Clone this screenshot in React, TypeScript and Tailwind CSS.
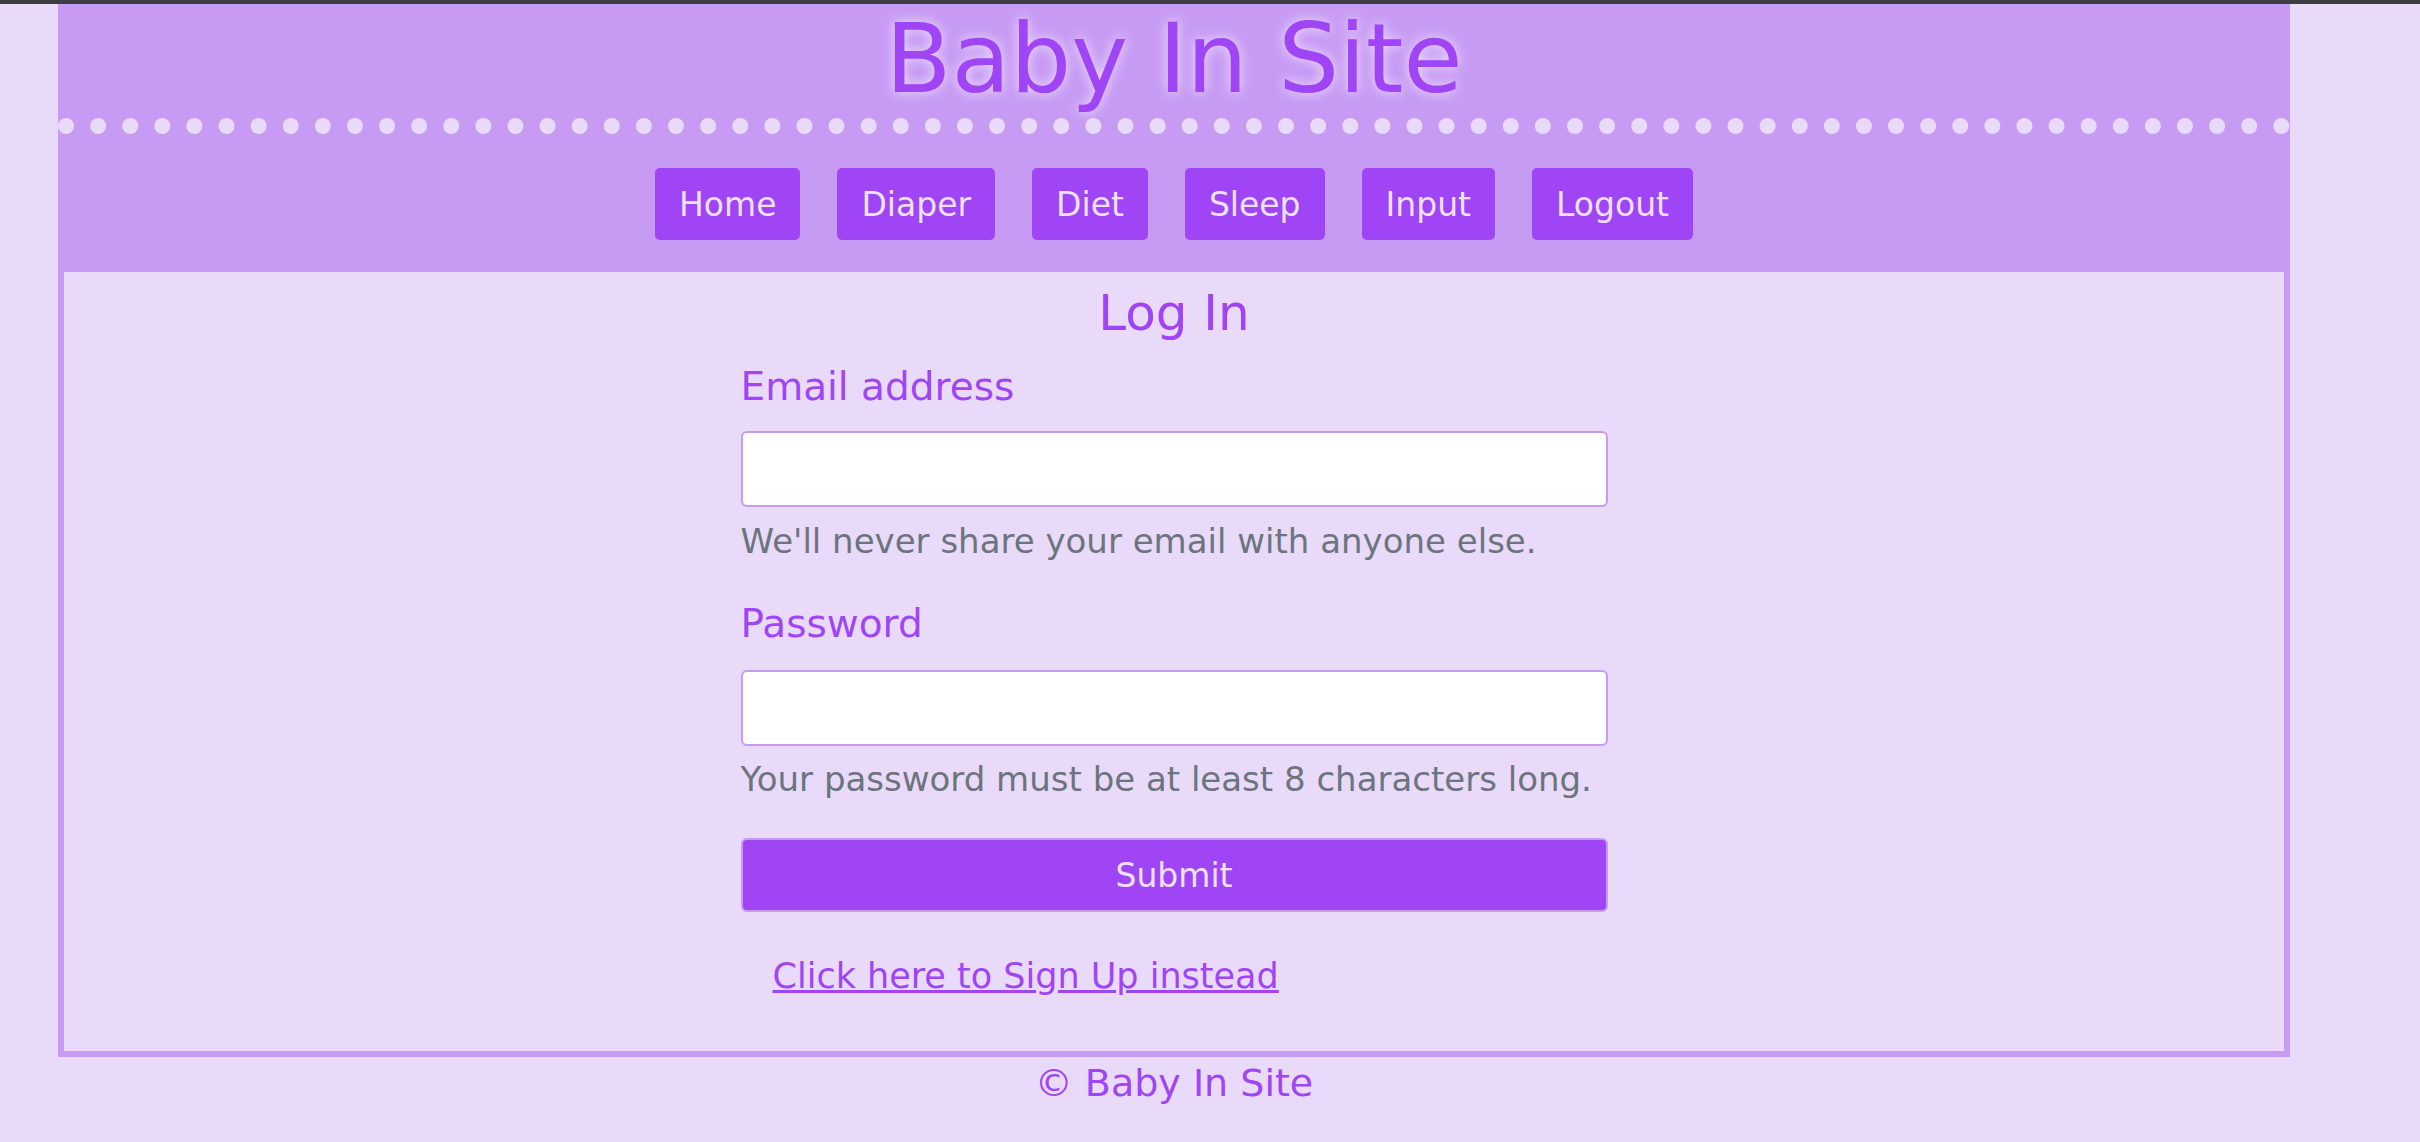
import React from "react";

const navItems = ["Home", "Diaper", "Diet", "Sleep", "Input", "Logout"];

export default function App() {
  return (
    <div className="min-h-screen bg-[#e9dafa] font-['DejaVu_Sans',sans-serif]">
      <div className="h-[4px] w-full bg-[#3d3c41]" />
      <div className="ml-[58px] w-[2232px] bg-[#c79bf4] px-[6px] pb-[6px]">
        <h1 className="-mx-[6px] pt-[7px] pb-[11px] text-center text-[96px] leading-[96px] font-normal text-[#a045f5] border-b-[16px] border-dotted border-[#e9dafa] [text-shadow:0_0_12px_#efe4fc]">
          Baby In Site
        </h1>
        <nav className="flex justify-center gap-[37px] pt-[34px] pb-[32px]">
          {navItems.map((item) => (
            <a
              key={item}
              href="#"
              className="flex h-[72px] items-center rounded-[5px] bg-[#a045f5] px-[24px] text-[33px] leading-none text-[#ede1fb]"
            >
              {item}
            </a>
          ))}
        </nav>
        <main className="bg-[#e9dafa] pt-[16px] pb-[57px]">
          <h2 className="text-center text-[50px] leading-[50px] font-normal text-[#a045f5]">
            Log In
          </h2>
          <form className="mx-auto mt-[29px] flex w-[867px] flex-col">
            <label className="text-[39px] leading-[39px] text-[#a045f5]">
              Email address
            </label>
            <input
              type="email"
              className="mt-[25px] h-[76px] rounded-[6px] border-2 border-[#c79bf4] bg-white"
            />
            <p className="mt-[17px] text-[34px] leading-[34px] text-[#6c757d]">
              We'll never share your email with anyone else.
            </p>
            <label className="mt-[46px] text-[39px] leading-[39px] text-[#a045f5]">
              Password
            </label>
            <input
              type="password"
              className="mt-[27px] h-[76px] rounded-[6px] border-2 border-[#c79bf4] bg-white"
            />
            <p className="mt-[16px] text-[34px] leading-[34px] text-[#6c757d]">
              Your password must be at least 8 characters long.
            </p>
            <button
              type="button"
              className="mt-[42px] h-[74px] rounded-[6px] border-2 border-[#c79bf4] bg-[#a045f5] text-[33px] leading-none text-[#ede1fb]"
            >
              Submit
            </button>
            <a
              href="#"
              className="ml-[32px] mt-[47px] text-[35px] leading-[35px] text-[#a045f5] underline"
            >
              Click here to Sign Up instead
            </a>
          </form>
        </main>
      </div>
      <footer className="ml-[58px] w-[2232px] pt-[7px] text-center text-[38px] leading-[38px] text-[#a045f5]">
        © Baby In Site
      </footer>
    </div>
  );
}
